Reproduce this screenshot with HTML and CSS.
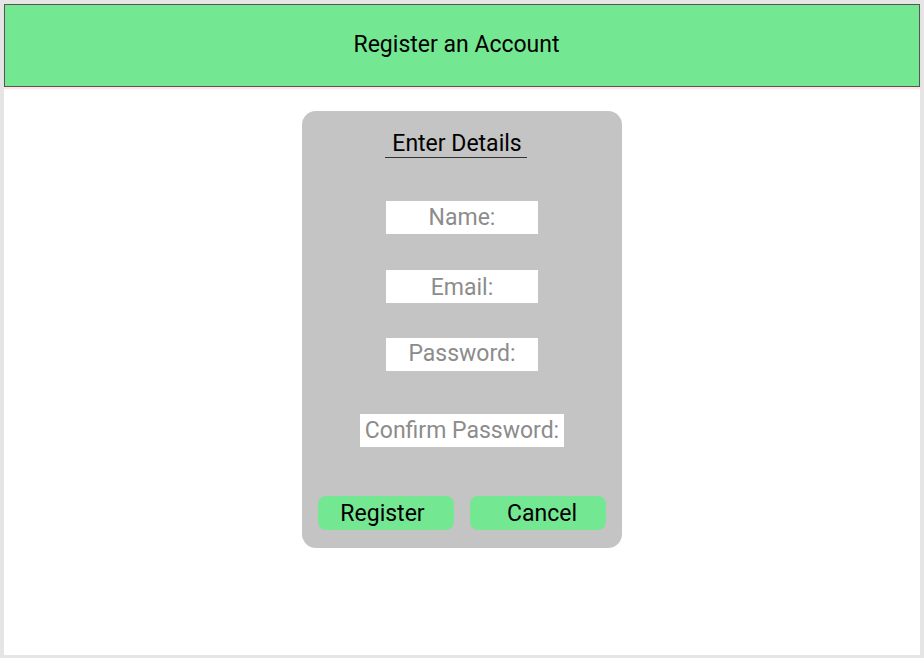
FILE: index.html
```html
<!DOCTYPE html>
<html lang="en">
<head>
<meta charset="utf-8">
<title>Register an Account</title>
<link rel="stylesheet" href="styles.css">
</head>
<body>
<div class="frame">
  <header class="topbar">Register an Account</header>
  <main class="content">
    <form class="card">
      <h2 class="card-title"><span>Enter Details</span></h2>
      <div class="field field-name">Name:</div>
      <div class="field field-email">Email:</div>
      <div class="field field-password">Password:</div>
      <div class="field field-confirm">Confirm Password:</div>
      <div class="actions">
        <button type="button" class="btn btn-register">Register</button>
        <button type="button" class="btn btn-cancel">Cancel</button>
      </div>
    </form>
  </main>
</div>
</body>
</html>
```
FILE: styles.css
```css
html, body {
  margin: 0;
  padding: 0;
}
body {
  background: #e5e5e5;
  padding: 4px 4px 3px 4px;
  font-family: Roboto, "Liberation Sans", sans-serif;
  height: 658px;
  box-sizing: border-box;
}
.frame {
  background: #ffffff;
  height: 651px;
  width: 916px;
  display: flex;
  flex-direction: column;
}
.topbar {
  height: 83px;
  box-sizing: border-box;
  background: #74e792;
  border: 1px solid #555555;
  box-shadow: 0 2px 1px rgba(255, 120, 120, 0.2);
  display: flex;
  align-items: center;
  justify-content: center;
  padding-right: 11px;
  padding-bottom: 3px;
  font-size: 23px;
  color: #000;
}
.content {
  display: flex;
  justify-content: center;
  padding-top: 24px;
}
.card {
  width: 320px;
  height: 437px;
  box-sizing: border-box;
  background: #c4c4c4;
  border-radius: 14px;
  display: flex;
  flex-direction: column;
  align-items: center;
  padding-top: 18px;
}
.card-title {
  margin: 0;
  font-weight: 400;
  font-size: 23px;
  line-height: 27px;
  height: 28px;
  margin-right: 12px;
}
.card-title span {
  display: inline-block;
  border-bottom: 1px solid #333;
  padding: 2px 5px 0 7px;
  line-height: 26px;
}
.field {
  background: #ffffff;
  color: #8c8c8c;
  font-size: 23px;
  height: 33px;
  line-height: 33px;
  width: 152px;
  text-align: center;
}
.field-name { margin-top: 44px; }
.field-email { margin-top: 36px; line-height: 36px; }
.field-password { margin-top: 35px; line-height: 31px; }
.field-confirm { margin-top: 43px; width: 204px; }
.actions {
  margin-top: 49px;
  display: flex;
  gap: 16px;
}
.btn {
  width: 136px;
  height: 34px;
  box-sizing: border-box;
  border: none;
  border-radius: 8px;
  background: #74e792;
  color: #000;
  font-family: Roboto, "Liberation Sans", sans-serif;
  font-size: 23px;
  padding: 1px 0 0 0;
  line-height: 34px;
}
.btn-register { padding-right: 7px; }
.btn-cancel { padding-left: 8px; }
```
